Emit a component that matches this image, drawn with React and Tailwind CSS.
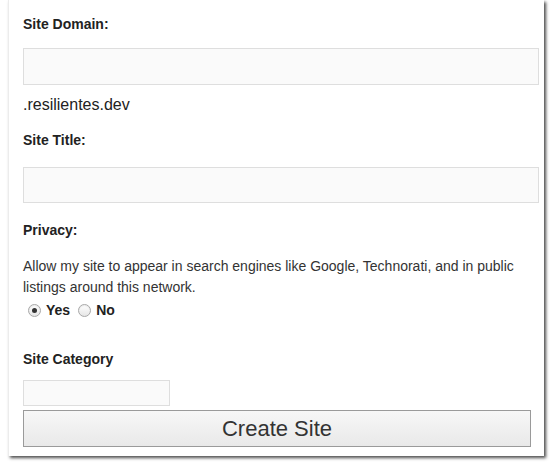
import React, { useState } from 'react';

const Label = ({ children, className = '' }) => (
  <div className={`text-[14px] leading-[20px] font-bold text-[#222] ${className}`}>{children}</div>
);

const TextBox = ({ className = '' }) => (
  <input
    type="text"
    className={`block bg-[#fafafa] border border-[#dedede] outline-none ${className}`}
  />
);

const Radio = ({ checked, onClick, label }) => (
  <button type="button" onClick={onClick} className="flex items-center gap-[5px]">
    <span className="w-[13px] h-[13px] rounded-full border border-[#a8a8a8] bg-gradient-to-b from-[#ffffff] to-[#e6e6e6] shadow-[inset_0_1px_1px_rgba(0,0,0,0.08)] flex items-center justify-center">
      {checked && <span className="w-[5px] h-[5px] rounded-full bg-[#333]" />}
    </span>
    <span className="text-[14px] leading-[20px] font-bold text-[#222]">{label}</span>
  </button>
);

export default function App() {
  const [priv, setPriv] = useState('yes');

  return (
    <div className="w-[553px] h-[465px] bg-white font-['Liberation_Sans',Arial,sans-serif]">
      <div className="ml-[8px] w-[536px] bg-white pl-[14px] pr-[5px] pt-[14px] pb-[9px] border-l border-[#ececec] shadow-[2px_2px_3px_rgba(0,0,0,0.7)]">
        <Label>Site Domain:</Label>
        <TextBox className="mt-[14px] w-[516px] h-[37px]" />
        <div className="mt-[10px] text-[16px] leading-[20px] text-[#222]">.resilientes.dev</div>

        <Label className="mt-[15px]">Site Title:</Label>
        <TextBox className="mt-[17px] w-[516px] h-[36px]" />

        <Label className="mt-[17px]">Privacy:</Label>
        <p className="mt-[16px] max-w-[505px] text-[14px] leading-[21px] text-[#333]">
          Allow my site to appear in search engines like Google, Technorati, and in public listings around this network.
        </p>
        <div className="mt-[2px] flex items-center gap-[8px] pl-[5px]">
          <Radio checked={priv === 'yes'} onClick={() => setPriv('yes')} label="Yes" />
          <Radio checked={priv === 'no'} onClick={() => setPriv('no')} label="No" />
        </div>

        <Label className="mt-[29px]">Site Category</Label>
        <TextBox className="mt-[11px] w-[147px] h-[26px]" />

        <button
          type="button"
          className="mt-[4px] block w-[508px] h-[37px] border border-[#9a9a9a] bg-gradient-to-b from-[#f7f7f7] to-[#e9e9e9] text-[22px] leading-[35px] text-[#333]"
        >
          Create Site
        </button>
      </div>
    </div>
  );
}
